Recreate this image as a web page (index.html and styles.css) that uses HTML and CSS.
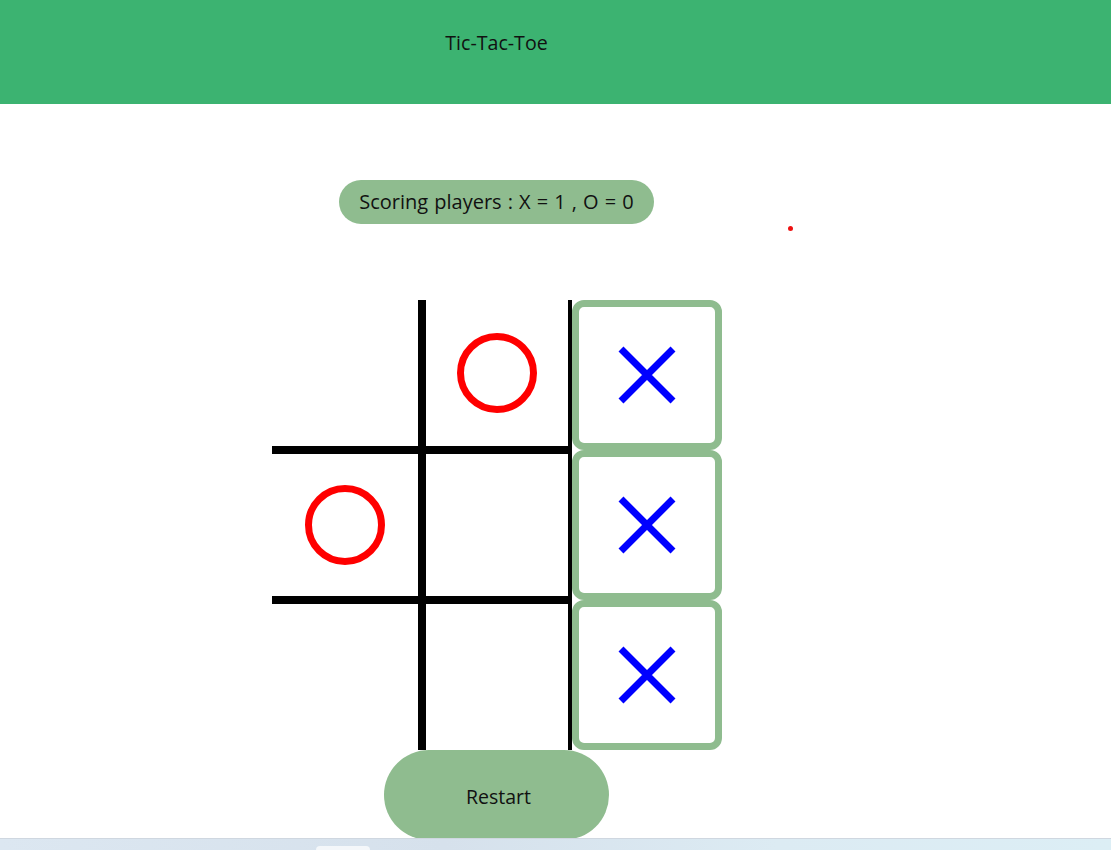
FILE: index.html
```html
<!DOCTYPE html>
<html lang="en">
<head>
<meta charset="utf-8">
<title>Tic-Tac-Toe</title>
<link rel="stylesheet" href="styles.css">
</head>
<body>
<header class="top-bar">
  <div class="top-inner">
    <h1 class="title">Tic-Tac-Toe</h1>
  </div>
</header>
<main class="page">
  <div class="score">Scoring players : X = 1 , O = 0</div>
  <span class="dot"></span>
  <div class="board">
    <div class="cell r1 c1"></div>
    <div class="cell r1 c2">
      <svg class="mark-o" width="80" height="80" viewBox="0 0 80 80"><circle cx="40" cy="40" r="36.5" fill="none" stroke="#ff0000" stroke-width="7"/></svg>
    </div>
    <div class="cell r1 c3 win">
      <svg class="mark-x" width="58" height="58" viewBox="0 0 58 58"><path d="M3 3 L55 55 M55 3 L3 55" stroke="#0000ff" stroke-width="7" fill="none"/></svg>
    </div>
    <div class="cell r2 c1">
      <svg class="mark-o" width="80" height="80" viewBox="0 0 80 80"><circle cx="40" cy="40" r="36.5" fill="none" stroke="#ff0000" stroke-width="7"/></svg>
    </div>
    <div class="cell r2 c2"></div>
    <div class="cell r2 c3 win">
      <svg class="mark-x" width="58" height="58" viewBox="0 0 58 58"><path d="M3 3 L55 55 M55 3 L3 55" stroke="#0000ff" stroke-width="7" fill="none"/></svg>
    </div>
    <div class="cell r3 c1"></div>
    <div class="cell r3 c2"></div>
    <div class="cell r3 c3 win">
      <svg class="mark-x" width="58" height="58" viewBox="0 0 58 58"><path d="M3 3 L55 55 M55 3 L3 55" stroke="#0000ff" stroke-width="7" fill="none"/></svg>
    </div>
  </div>
  <button class="restart" type="button">Restart</button>
</main>
<div class="taskbar"><span class="task-tab"></span></div>
</body>
</html>
```
FILE: styles.css
```css
* {
  box-sizing: border-box;
}

html, body {
  margin: 0;
  padding: 0;
  background: #ffffff;
}

body {
  font-family: "Open Sans", "Noto Sans", sans-serif;
  color: #111111;
  overflow: hidden;
  height: 850px;
}

.top-bar {
  height: 104px;
  background: #3cb371;
}

.top-inner {
  width: 993px;
  padding-top: 31px;
  text-align: center;
}

.title {
  margin: 0;
  font-size: 19.6px;
  font-weight: 400;
  line-height: 24px;
}

.page {
  position: relative;
  width: 993px;
  display: flex;
  flex-direction: column;
  align-items: center;
}

.score {
  margin-top: 76px;
  height: 44px;
  width: 315px;
  border-radius: 22px;
  background: #8fbc8f;
  font-size: 20px;
  line-height: 44px;
  text-align: center;
  word-spacing: 0.9px;
}

.dot {
  position: absolute;
  left: 788px;
  top: 122px;
  width: 5px;
  height: 5px;
  border-radius: 50%;
  background: #ee1111;
}

.board {
  margin-top: 76px;
  display: grid;
  grid-template-columns: repeat(3, 150px);
  grid-template-rows: repeat(3, 150px);
}

.cell {
  display: flex;
  align-items: center;
  justify-content: center;
  border: 4px solid #000000;
}

.r1 { border-top: none; }
.r3 { border-bottom: none; }
.c1 { border-left: none; }
.c3 { border-right: none; }

.cell.win {
  border: 7px solid #8fbc8f;
  border-radius: 12px;
}

.restart {
  width: 225px;
  height: 90px;
  border: none;
  border-radius: 45px;
  background: #8fbc8f;
  font-family: "Open Sans", "Noto Sans", sans-serif;
  font-size: 19.5px;
  color: #111111;
  padding: 3px 0 0 4px;
}

.taskbar {
  position: fixed;
  left: 0;
  right: 0;
  bottom: 0;
  height: 12px;
  border-top: 1px solid #cfd7e0;
  background: linear-gradient(90deg, #dce7f1 0%, #d6e1ec 40%, #dcebf3 70%, #dceef5 100%);
}

.task-tab {
  position: absolute;
  left: 316px;
  top: 7px;
  width: 54px;
  height: 8px;
  border-radius: 4px;
  background: #f4f7fa;
}
```
